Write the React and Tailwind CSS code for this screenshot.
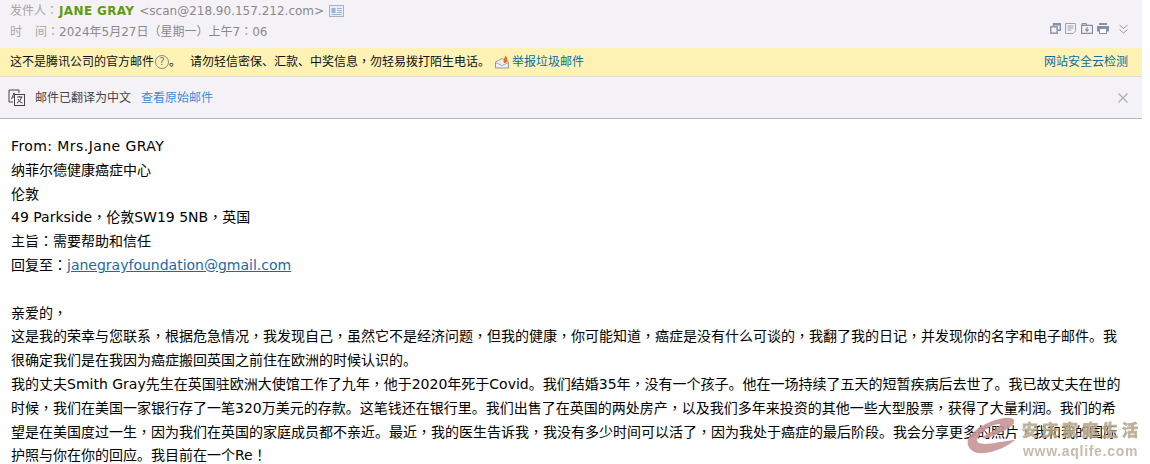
const cjk = "font-['DejaVu_Sans','Noto_Sans_CJK_SC',sans-serif]";

// Full-width ， and ： sit centred in the cell in the reference.
function T({ children }) {
  const parts = String(children).split(/([，：！]+)/).filter(Boolean);
  return parts.map((p, i) =>
    /^[，：！]+$/.test(p)
      ? <span key={i} className="leading-[0] font-['Noto_Sans_CJK_TC',sans-serif]">{p}</span>
      : <span key={i}>{p}</span>
  );
}

function Icons() {
  return (
    <div className="flex items-center gap-[4px]">
      <svg width="11" height="11" viewBox="0 0 11 11" fill="none" stroke="#8492a8" strokeWidth="1.4"><path d="M3.5 3V.8h6.8v6.4H7.6" /><rect x="0.8" y="3.8" width="6.4" height="6.4" /><path d="M3.5 1.5h6.8" strokeWidth="2" /></svg>
      <svg width="11" height="11" viewBox="0 0 11 11" fill="none" stroke="#98a4b6" strokeWidth="1"><path d="M.5.5h10v7.5l-2.5 2.5H.5z" /><path d="M2.5 3h6M2.5 5h6M2.5 7h4" /></svg>
      <svg className="ml-[1px]" width="12" height="11" viewBox="0 0 12 11" fill="none" stroke="#8492a8" strokeWidth="1.2"><path d="M.6 2.4h10.8v8H.6z" /><path d="M.6 2.4l.8-1.8h3.6l.8 1.8" /><path d="M6 4v4M4.3 6.4L6 8.2l1.7-1.8" /></svg>
      <svg width="12" height="11" viewBox="0 0 12 11"><rect x="2" y="0" width="8" height="2" fill="#8492a8" /><rect x="0" y="3" width="12" height="5.5" fill="#8492a8" /><rect x="2.5" y="5.5" width="7" height="5" fill="#fff" stroke="#8492a8" /></svg>
      <svg className="ml-[6px]" width="9" height="10" viewBox="0 0 9 10" fill="none" stroke="#8a8f98" strokeWidth="0.9"><path d="M.5 1l4 3.5 4-3.5M.5 5.5l4 3.5 4-3.5" /></svg>
    </div>
  );
}

function Watermark() {
  return (
    <div className="absolute left-[960px] top-[415px] w-[190px] h-[49px] pointer-events-none">
      <svg className="absolute left-0 top-0 opacity-90" width="80" height="49" viewBox="0 0 80 49">
        <path d="M8 30C5 22 18 12 30 7 40 3 52 1 54 5 56 10 44 17 30 22 25 24 20 24 24 21 32 17 41 11 40 9 33 9 22 15 17 24 16 30 25 30 40 27 46 26 52 25 55 25 48 31 36 37 24 38 16 39 10 36 8 30Z" fill="#c79596" />
      </svg>
      <div className="absolute left-[62px] top-[4px] text-[16px] leading-[20px] font-bold text-[#b5a98f] [-webkit-text-stroke:0.8px_#b5a98f] opacity-90 blur-[0.6px] tracking-[4px] font-['Noto_Sans_CJK_SC',sans-serif] whitespace-nowrap">安庆家庭生活</div>
      <div className="absolute left-[63px] top-[28px] text-[14px] leading-[16px] font-bold text-[#c5bdac] blur-[0.4px] tracking-[0.7px] font-['Liberation_Sans',sans-serif] whitespace-nowrap">www.aqlife.com</div>
    </div>
  );
}

export default function App() {
  const lines = ["纳菲尔德健康癌症中心", "伦敦", "49 Parkside，伦敦SW19 5NB，英国", "主旨：需要帮助和信任"];
  return (
    <div className={`relative w-[1150px] h-[464px] overflow-hidden bg-white ${cjk}`}>
      <div className="w-[1142px] bg-[#f5f2f7]">
        <div className="h-[48px] pl-[10px] pr-[14px] flex justify-between text-[12px] text-[#8a8a8a]">
          <div className="pt-[1px]">
            <div className="h-[20px] leading-[19px] flex items-center whitespace-nowrap">
              <span className="text-[#a6a6a6]"><T>发件人：</T></span>
              <span className="font-bold text-[#5d9c0a] ml-[1px] tracking-[0.35px]">JANE GRAY</span>
              <span className="ml-[5px]">&lt;scan@218.90.157.212.com&gt;</span>
              <svg className="ml-[5px]" width="15" height="12" viewBox="0 0 15 12"><rect x="0.5" y="0.5" width="14" height="11" fill="#e8eef7" stroke="#9db4d2" /><rect x="2.5" y="3" width="4" height="5" fill="#9db4d2" /><path d="M8 3.5h5M8 5.5h5M8 7.5h5M2.5 9.5h10" stroke="#9db4d2" /></svg>
            </div>
            <div className="h-[22px] leading-[22px] whitespace-nowrap">
              <span className="text-[#a6a6a6]">时<span className="ml-[13px]"><T>间：</T></span></span>
              <T>2024年5月27日（星期一）上午7：06</T>
            </div>
          </div>
          <div className="pt-[23px]"><Icons /></div>
        </div>
        <div className="h-[29px] bg-[#fff2b5] border-b border-[#e0dcdc] pl-[10px] pr-[14px] flex items-center justify-between text-[12px] text-[#111]">
          <div className="flex items-center whitespace-nowrap">
            <span>这不是腾讯公司的官方邮件</span>
            <span className="inline-flex w-[14px] h-[14px] ml-[1px] items-center justify-center rounded-full border border-[#888] text-[#777] text-[10px] leading-none">?</span>
            <span>。</span>
            <span className="ml-[9px]"><T>请勿轻信密保、汇款、中奖信息，勿轻易拨打陌生电话。</T></span>
            <svg className="ml-[5px]" width="14" height="14" viewBox="0 0 14 14"><path d="M.5 13V7L7 3.5 13.5 7v6z" fill="#eee" stroke="#999" /><path d="M.5 7.5L7 10.5l6.5-3" fill="none" stroke="#aaa" /><path d="M9.5 8C7.5 6.5 9 4 10.5 0.5 12.5 3 13.5 6.5 10.5 8z" fill="#f26a21" /></svg>
            <span className="ml-[3px] text-[#0d6aa6]">举报垃圾邮件</span>
          </div>
          <span className="text-[#0d6aa6]">网站安全云检测</span>
        </div>
        <div className="h-[42px] border-b border-[#b9b9b9] pl-[8px] pr-[14px] flex items-center justify-between text-[12px]">
          <div className="flex items-center">
            <svg width="18" height="18" viewBox="0 0 18 18" fill="none" stroke="#444" strokeWidth="1"><path d="M11 4V1H1v12h4" /><path d="M3.5 10L6 4l2.5 6M4.5 8h3" /><rect x="6.5" y="5.5" width="10" height="11" fill="#f5f2f7" /><path d="M9 8h5.5M11.7 7v1M13.5 8c-.6 3-2.5 5-4.5 6M10 10c.8 2 2.5 3.5 4.5 4" /></svg>
            <span className="ml-[9px] text-[#444]">邮件已翻译为中文</span>
            <span className="ml-[10px] text-[#3b8de0]">查看原始邮件</span>
          </div>
          <svg width="10" height="10" viewBox="0 0 10 10" stroke="#a8b0bc" strokeWidth="1.3"><path d="M.5.5l9 9M9.5.5l-9 9" /></svg>
        </div>
      </div>
      <div className="w-[1142px] pl-[11px] pr-[14px] pt-[16px] text-[14px] leading-[23.8px] text-black">
        <div className="tracking-[0.42px]">From: Mrs.Jane GRAY</div>
        {lines.map((l) => <div key={l}><T>{l}</T></div>)}
        <div><T>回复至：</T><a className="text-[#1a6aa8] underline">janegrayfoundation@gmail.com</a></div>
        <div className="h-[23.8px]" />
        <div><T>亲爱的，</T></div>
        <div><T>这是我的荣幸与您联系，根据危急情况，我发现自己，虽然它不是经济问题，但我的健康，你可能知道，癌症是没有什么可谈的，我翻了我的日记，并发现你的名字和电子邮件。我很确定我们是在我因为癌症搬回英国之前住在欧洲的时候认识的。</T></div>
        <div><T>我的丈夫Smith Gray先生在英国驻欧洲大使馆工作了九年，他于2020年死于Covid。我们结婚35年，没有一个孩子。他在一场持续了五天的短暂疾病后去世了。我已故丈夫在世的时候，我们在美国一家银行存了一笔320万美元的存款。这笔钱还在银行里。我们出售了在英国的两处房产，以及我们多年来投资的其他一些大型股票，获得了大量利润。我们的希望是在美国度过一生，因为我们在英国的家庭成员都不亲近。最近，我的医生告诉我，我没有多少时间可以活了，因为我处于癌症的最后阶段。我会分享更多的照片，我和我的国际护照与你在你的回应。我目前在一个Re！</T></div>
      </div>
      <Watermark />
    </div>
  );
}
